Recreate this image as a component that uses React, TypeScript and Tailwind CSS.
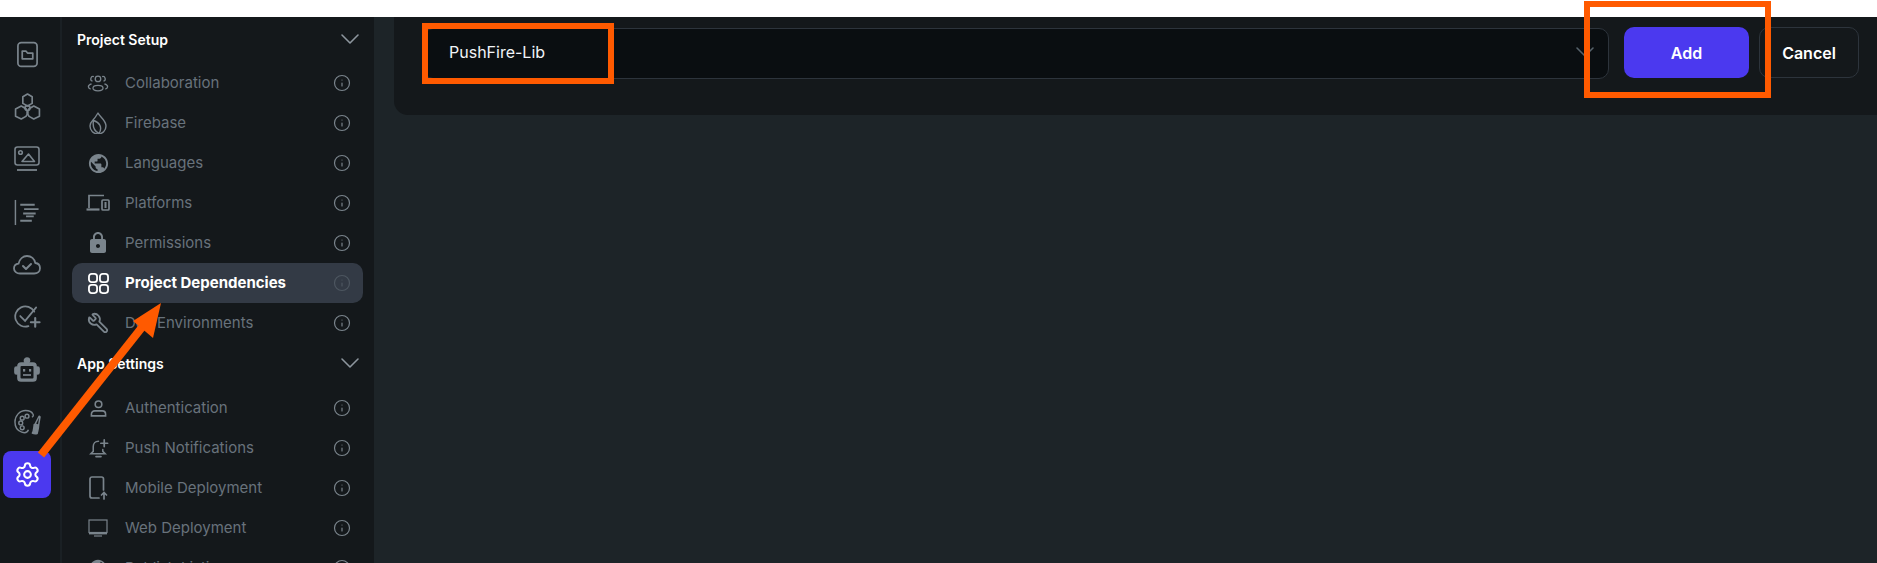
import { ChevronDown, Info, Wrench, Settings } from 'lucide-react';
import { MdLock, MdPublic } from 'react-icons/md';
import type { ReactNode } from 'react';

const FolderPhone = () => (
  <svg viewBox="0 0 24 28" className="w-[23px] h-[27px]" fill="none" stroke="currentColor" strokeWidth="1.8">
    <rect x="2" y="1.500" width="20" height="25" rx="3.500" />
    <path d="M6.500 10.500h4l1.500 2h5.500v6h-11z" strokeLinejoin="round" />
  </svg>
);
const Hexes = () => (
  <svg viewBox="0 0 26 26" className="w-[27px] h-[27px]" fill="none" stroke="currentColor" strokeWidth="1.600" strokeLinejoin="round">
    <path d="M13 1l4.500 2.600v6.400L13 12.500 8.500 10V3.600z" />
    <path d="M7 12.500l4.500 2.600 2 4-2 3.400L7 25l-5.500-2.500v-7z" />
    <path d="M19 12.500l5.500 3v7L19 25l-4.500-2.500-2-3.400 2-4z" />
    <circle cx="13" cy="14.500" r="2.400" />
  </svg>
);
const ImageBar = () => (
  <svg viewBox="0 0 26 26" className="w-[26px] h-[26px]" fill="none" stroke="currentColor" strokeWidth="1.600" strokeLinejoin="round">
    <rect x="1" y="1" width="24" height="18" rx="2.500" />
    <circle cx="6.500" cy="6.500" r="1.800" />
    <path d="M8 15.500l6.500-7.500 6 7.500z" />
    <path d="M3 24h20" strokeWidth="1.800" />
  </svg>
);
const Lines = () => (
  <svg viewBox="0 0 26 28" className="w-[26px] h-[27px]" fill="none" stroke="currentColor" strokeWidth="2">
    <path d="M1 1v26" strokeWidth="1.500" />
    <path d="M6 6h15M10 10.500h15M9 15h13M12 18h8M6 22.500h12" />
  </svg>
);
const Cloud = () => (
  <svg viewBox="0 0 28 20" className="w-[28px] h-[20px]" fill="none" stroke="currentColor" strokeWidth="1.800" strokeLinejoin="round" strokeLinecap="round">
    <path d="M7 18.500c-3.300 0-6-2-6-5 0-2.600 2-4.500 4.500-4.800C6.500 4 10 1 14 1c4.300 0 7.500 3 8.300 7 2.800.3 4.700 2.500 4.700 5.200 0 3-2.500 5.300-5.800 5.300z" />
    <path d="M10 11l3 3 5-5" strokeWidth="2" />
  </svg>
);
const CheckPlus = () => (
  <svg viewBox="0 0 28 24" className="w-[27px] h-[24px]" fill="none" stroke="currentColor" strokeWidth="1.800" strokeLinecap="round">
    <path d="M21 6.500A10.500 10.500 0 1 0 15 21.500" />
    <path d="M6.500 11l5 5L23 2" />
    <path d="M22 13v9M17.500 17.500h9" strokeWidth="2.200" />
  </svg>
);
const Robot = () => (
  <svg viewBox="0 0 26 26" className="w-[26px] h-[26px]" fill="none" stroke="currentColor" strokeWidth="1.700">
    <circle cx="13" cy="3.500" r="2.500" fill="currentColor" />
    <rect x="4" y="6" width="18" height="18" rx="3" fill="currentColor" />
    <rect x="1" y="10" width="3" height="7" rx="1.500" fill="currentColor" />
    <rect x="22" y="10" width="3" height="7" rx="1.500" fill="currentColor" />
    <rect x="6.500" y="9" width="13" height="12.500" rx="1" fill="#14181b" stroke="none" />
    <rect x="9" y="12" width="2.200" height="2.600" fill="currentColor" stroke="none" />
    <rect x="15" y="12" width="2.200" height="2.600" fill="currentColor" stroke="none" />
    <path d="M9 18h8" />
  </svg>
);
const Palette = () => (
  <svg viewBox="0 0 28 26" className="w-[27px] h-[26px]" fill="none" stroke="currentColor" strokeWidth="1.500" strokeLinejoin="round">
    <path d="M15 21c-1 2.800-4 3.500-7 2.500C3.500 22 1 18 1 13 1 6.500 6 1 12 1c3.500 0 6.500 1.500 7.500 3.500" />
    <path d="M19.500 4.500c1 1.500.5 3-1 3.500" />
    <circle cx="7" cy="14" r="2" />
    <circle cx="8.500" cy="19" r="2" />
    <circle cx="8.500" cy="9" r="2" />
    <circle cx="13.500" cy="7" r="2" />
    <path d="M22 15l4-8 1 .600-1.500 8.900z" />
    <path d="M21 15.500l4.500 1.500c0 3-1 5.500-1.500 8-2 .5-4 0-5-.500 1.500-2 1.500-6 2-9z" fill="currentColor" />
  </svg>
);

const People = () => (
  <svg viewBox="0 0 24 20" className="w-[22px] h-[19px]" fill="none" stroke="currentColor" strokeWidth="1.400">
    <circle cx="12" cy="5" r="3" />
    <path d="M7.500 2.500a2.500 2.500 0 0 0-1.500 5M16.500 2.500a2.500 2.500 0 0 1 1.500 5" />
    <ellipse cx="12" cy="15" rx="5.500" ry="3" />
    <path d="M5 10.500c-2 .6-3.500 1.700-3.500 3s1 2 2.500 2.600M19 10.500c2 .6 3.500 1.700 3.500 3s-1 2-2.500 2.600" />
  </svg>
);
const Flame = () => (
  <svg viewBox="0 0 18 22" className="w-[18px] h-[22px]" fill="none" stroke="currentColor" strokeWidth="1.400" strokeLinejoin="round">
    <path d="M9 1c1.500 3.500 8 7 8 13a8 8 0 0 1-16 0c0-2.800 1.500-4.500 3-6C6 6 7.500 3.500 9 1z" />
    <path d="M10 21.500C5 19 3.500 14 4.500 8.500 10 10 14 15 10 21.500z" />
  </svg>
);
const Devices = () => (
  <svg viewBox="0 0 24 18" className="w-6 h-[18px]" fill="none" stroke="currentColor" strokeWidth="1.700">
    <path d="M3 14V1.500h15" />
    <path d="M.5 15.500h13" strokeWidth="2.200" />
    <rect x="16" y="6" width="7" height="10" rx="1" />
    <rect x="18.500" y="8" width="2" height="6" fill="currentColor" stroke="none" />
  </svg>
);
const Grid4 = () => (
  <svg viewBox="0 0 22 22" className="w-[21px] h-[21px]" fill="none" stroke="white" strokeWidth="1.900">
    <rect x="1" y="1" width="8.500" height="8.500" rx="2.800" />
    <rect x="12.500" y="1" width="8.500" height="8.500" rx="2.800" />
    <rect x="1" y="12.500" width="8.500" height="8.500" rx="2.800" />
    <rect x="12.500" y="12.500" width="8.500" height="8.500" rx="2.800" />
  </svg>
);
const Person = () => (
  <svg viewBox="0 0 18 18" className="w-[17px] h-[17px]" fill="none" stroke="currentColor" strokeWidth="1.700">
    <circle cx="9" cy="4.500" r="3.500" />
    <path d="M1.500 16.800v-1.800c0-2 1.500-3.500 3.500-3.500h8c2 0 3.500 1.500 3.500 3.500v1.800z" />
  </svg>
);
const BellPlus = () => (
  <svg viewBox="0 0 22 22" className="w-[21px] h-[21px]" fill="none" stroke="currentColor" strokeWidth="1.600" strokeLinecap="round">
    <path d="M11 3.500C7.500 3.500 5.500 6 5.500 9v5l-2.500 2.500h15L15.500 14v-2" />
    <path d="M8.500 19.500h5" strokeWidth="2" />
    <path d="M17 2v7M13.500 5.500h7" strokeWidth="1.800" />
  </svg>
);
const PhoneUp = () => (
  <svg viewBox="0 0 20 24" className="w-5 h-6" fill="none" stroke="currentColor" strokeWidth="1.700" strokeLinecap="round">
    <path d="M11 22H4a2 2 0 0 1-2-2V3a2 2 0 0 1 2-2h9.500a2 2 0 0 1 2 2v11" />
    <path d="M16 23v-6M13.500 19l2.500-2.500 2.500 2.500" />
  </svg>
);
const Monitor = () => (
  <svg viewBox="0 0 20 18" className="w-5 h-[18px]" fill="none" stroke="currentColor" strokeWidth="1.200">
    <rect x="1" y="1" width="18" height="12.500" />
    <path d="M1 14.500h18" strokeWidth="1.800" />
    <path d="M6 17h8" />
  </svg>
);

type Item = { label: string; icon: ReactNode; active?: boolean };

const setup: Item[] = [
  { label: 'Collaboration', icon: <People /> },
  { label: 'Firebase', icon: <Flame /> },
  { label: 'Languages', icon: <MdPublic className="w-[23px] h-[23px]" /> },
  { label: 'Platforms', icon: <Devices /> },
  { label: 'Permissions', icon: <MdLock className="w-6 h-6" /> },
  { label: 'Project Dependencies', icon: <Grid4 />, active: true },
  { label: 'Dev Environments', icon: <Wrench className="w-[22px] h-[22px] -scale-x-100" strokeWidth={2} /> },
];

const appSettings: Item[] = [
  { label: 'Authentication', icon: <Person /> },
  { label: 'Push Notifications', icon: <BellPlus /> },
  { label: 'Mobile Deployment', icon: <PhoneUp /> },
  { label: 'Web Deployment', icon: <Monitor /> },
  { label: 'Publish Listing', icon: <MdPublic className="w-5 h-5" /> },
];

const rail = [<FolderPhone />, <Hexes />, <ImageBar />, <Lines />, <Cloud />, <CheckPlus />, <Robot />, <Palette />];

const Row = ({ item }: { item: Item }) => (
  <div className={`h-10 flex items-center rounded-[10px] shrink-0 ${item.active ? 'bg-[#333a45]' : ''}`}>
    <div className="w-[53px] pr-[1px] flex justify-center text-[#7a848c]">{item.icon}</div>
    <span className={`flex-1 text-[15px] ${item.active ? 'font-bold text-white' : 'text-[#68727b]'}`}>{item.label}</span>
    <Info className={`w-[18px] h-[18px] mr-[12px] ${item.active ? 'text-[#4d5660]' : 'text-[#7a848c]'}`} strokeWidth={1.6} />
  </div>
);

const Section = ({ title, className }: { title: string; className: string }) => (
  <div className={`flex items-center justify-between pl-[5px] -mr-[3px] shrink-0 ${className}`}>
    <span className="text-[14px] font-semibold text-white">{title}</span>
    <ChevronDown className="w-8 h-8 text-[#8d969e]" strokeWidth={1.2} />
  </div>
);

export default function App() {
  return (
    <div className="relative w-[1877px] h-[563px] overflow-hidden bg-white font-['Inter',sans-serif]">
      <div className="h-[17px]" />
      <div className="flex h-[546px]">
        {/* icon rail */}
        <div className="w-[62px] shrink-0 bg-[#14181b] border-r-2 border-[#1a2024] flex flex-col items-center pt-[11px] pr-[6px]">
          {rail.map((icon, i) => (
            <div key={i} className="h-[52.600px] w-full flex items-center justify-center text-[#7a848c]">{icon}</div>
          ))}
          <div className="w-12 h-[47px] mt-[2px] rounded-[8px] bg-[#4b39ef] flex items-center justify-center">
            <Settings className="w-[27px] h-[27px] text-white" strokeWidth={1.8} />
          </div>
        </div>

        {/* settings menu */}
        <div className="w-[312px] shrink-0 bg-[#14181b] flex flex-col pl-[10px] pr-[11px] overflow-hidden">
          <Section title="Project Setup" className="h-[46px] pb-[2px]" />
          {setup.map((item) => <Row key={item.label} item={item} />)}
          <Section title="App Settings" className="h-[45px] pb-[5px]" />
          {appSettings.map((item) => <Row key={item.label} item={item} />)}
        </div>

        {/* main */}
        <div className="flex-1 bg-[#1d2428] pl-[20px]">
          <div className="h-[98px] bg-[#14181b] rounded-bl-[14px] flex items-start pt-[10px] pl-[29px] pr-[18px]">
            <div className="flex-1 h-[51px] mt-[1px] rounded-[10px] bg-[#0a0e11] border border-[#2d343c] flex items-center justify-between pl-[25px] pr-[7px]">
              <span className="text-[16px] pb-[3px] text-[#f1f4f8]">PushFire-Lib</span>
              <ChevronDown className="w-8 h-8 mb-[3px] text-[#57636c]" strokeWidth={1.2} />
            </div>
            <button className="ml-[15px] w-[125px] h-[51px] rounded-[10px] bg-[#4b39ef] text-white text-[16px] font-semibold">Add</button>
            <button className="ml-[10px] w-[100px] h-[51px] rounded-[10px] border border-[#2d343c] text-white text-[16px] font-semibold">Cancel</button>
          </div>
        </div>
      </div>

      {/* orange annotations */}
      <div className="absolute left-[422px] top-[23px] w-[192px] h-[61px] border-[6px] border-[#ff5a00]" />
      <div className="absolute left-[1584px] top-[1px] w-[187px] h-[97px] border-[6px] border-[#ff5a00]" />
      <svg className="absolute left-0 top-0 w-[1877px] h-[563px] pointer-events-none" viewBox="0 0 1877 563">
        <path d="M41 455L143 326" stroke="#ff5a00" strokeWidth="8" />
        <path d="M161 303L133 321L153 338z" fill="#ff5a00" />
      </svg>
    </div>
  );
}
